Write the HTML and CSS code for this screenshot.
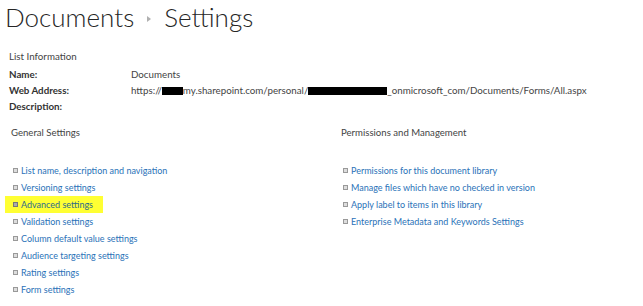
FILE: index.html
```html
<!DOCTYPE html>
<html lang="en">
<head>
    <meta charset="UTF-8">
    <title>Documents - Settings</title>
    <link rel="stylesheet" href="styles.css">
</head>
<body>
    <div class="page">
        <!-- Title -->
        <h1 class="page-title">
            <span>Documents</span>
            <span class="crumb-arrow"></span>
            <span>Settings</span>
        </h1>

        <!-- List information -->
        <div class="list-info">
            <div class="section-label">List Information</div>
            <div class="info-row">
                <div class="info-key">Name:</div>
                <div class="info-value">Documents</div>
            </div>
            <div class="info-row">
                <div class="info-key">Web Address:</div>
                <div class="info-value">https://<span class="redact r1"></span>my.sharepoint.com/personal/<span class="redact r2"></span>_onmicrosoft_com/Documents/Forms/All.aspx</div>
            </div>
            <div class="info-row">
                <div class="info-key">Description:</div>
                <div class="info-value"></div>
            </div>
        </div>

        <!-- Settings columns -->
        <div class="settings">
            <div class="settings-col left">
                <h3 class="col-title">General Settings</h3>
                <ul class="link-list">
                    <li><a href="#">List name, description and navigation</a></li>
                    <li><a href="#">Versioning settings</a></li>
                    <li class="highlight"><a href="#">Advanced settings</a></li>
                    <li><a href="#">Validation settings</a></li>
                    <li><a href="#">Column default value settings</a></li>
                    <li><a href="#">Audience targeting settings</a></li>
                    <li><a href="#">Rating settings</a></li>
                    <li><a href="#">Form settings</a></li>
                </ul>
            </div>
            <div class="settings-col right">
                <h3 class="col-title">Permissions and Management</h3>
                <ul class="link-list">
                    <li><a href="#">Permissions for this document library</a></li>
                    <li><a href="#">Manage files which have no checked in version</a></li>
                    <li><a href="#">Apply label to items in this library</a></li>
                    <li><a href="#">Enterprise Metadata and Keywords Settings</a></li>
                </ul>
            </div>
        </div>
    </div>
</body>
</html>
```

FILE: styles.css
```css
body {
    margin: 0;
    background: #fff;
    font-family: Lato, "Open Sans", sans-serif;
    color: #444;
    overflow: hidden;
}

.page {
    padding: 0 0 0 5px;
}

.page-title {
    margin: 0;
    font-weight: 300;
    font-size: 26px;
    line-height: 34px;
    color: #262626;
    display: flex;
    align-items: center;
    gap: 9px;
}

.crumb-arrow {
    width: 0;
    height: 0;
    border-top: 3px solid transparent;
    border-bottom: 3px solid transparent;
    border-left: 4px solid #b0b0b0;
    margin: 4px 4px 0;
}

.list-info {
    margin-top: 14px;
    padding-left: 4px;
    font-size: 9.75px;
}

.section-label {
    line-height: 16px;
    margin-bottom: 2px;
    color: #444;
}

.info-row {
    display: flex;
    line-height: 16px;
}

.info-key {
    width: 122px;
    font-weight: 700;
    color: #333;
}

.info-value {
    color: #444;
}

.redact {
    display: inline-block;
    height: 8px;
    background: #000;
    vertical-align: -1px;
}

.r1 { width: 21px; }
.r2 { width: 79px; }

.settings {
    display: flex;
    margin-top: 11px;
    padding-left: 6px;
}

.settings-col.left {
    width: 330px;
}

.col-title {
    margin: 0 0 21px;
    font-weight: 400;
    font-size: 9.6px;
    line-height: 16px;
    color: #444;
}

.link-list {
    list-style: none;
    margin: 0;
    padding: 0;
    font-size: 9px;
}

.link-list li {
    line-height: 17px;
    display: flex;
    align-items: center;
    width: max-content;
    padding-right: 6px;
}

.link-list li::before {
    content: "";
    width: 3px;
    height: 3px;
    border: 1px solid #999;
    background: #ddd;
    margin: 0 3px 0 2px;
}

.link-list a {
    color: #2a72b8;
    text-decoration: none;
}

.link-list li.highlight {
    background: #ffff33;
    margin-left: -6px;
    padding-left: 6px;
    padding-right: 10px;
}

.link-list li.highlight::before {
    border-color: #777;
    background: #aaa;
}

.link-list li.highlight a {
    color: #2d6a8c;
}
```
